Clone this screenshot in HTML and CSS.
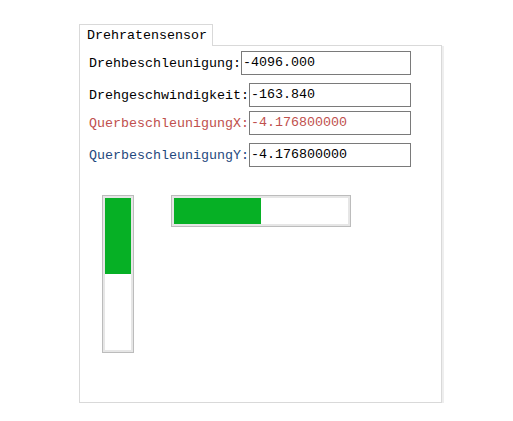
FILE: index.html
```html
<!DOCTYPE html>
<html>
<head>
<meta charset="utf-8">
<link rel="stylesheet" href="styles.css">
</head>
<body>
<div class="page">
  <div class="tab">Drehratensensor</div>
  <div class="panel">
    <div class="row r1"><span class="label">Drehbeschleunigung:</span><div class="field">-4096.000</div></div>
    <div class="row r2"><span class="label">Drehgeschwindigkeit:</span><div class="field">-163.840</div></div>
    <div class="row r3 red"><span class="label">QuerbeschleunigungX:</span><div class="field">-4.176800000</div></div>
    <div class="row r4 blue"><span class="label">QuerbeschleunigungY:</span><div class="field black">-4.176800000</div></div>
    <div class="bars">
      <div class="vbar"><div class="vfill" style="height:50%"></div></div>
      <div class="hbar"><div class="hfill" style="width:50%"></div></div>
    </div>
  </div>
</div>
</body>
</html>
```
FILE: styles.css
```css
html, body {
  margin: 0;
  padding: 0;
  background: #ffffff;
}
.page {
  padding: 24px 0 0 79px;
  font-family: "Liberation Mono", "DejaVu Sans Mono", monospace;
  font-size: 13.33px;
  color: #000;
}
.tab {
  position: relative;
  z-index: 1;
  width: 134px;
  height: 22px;
  box-sizing: border-box;
  border: 1px solid #d9d9d9;
  border-bottom: none;
  background: #fff;
  padding-left: 7px;
  line-height: 22px;
  margin-bottom: -1px;
}
.panel {
  width: 363px;
  height: 358px;
  box-sizing: border-box;
  border: 1px solid #d9d9d9;
  box-shadow: 2px 1px 0 #eeeeee;
  padding: 5px 0 0 9px;
}
.row {
  display: flex;
  align-items: center;
  width: 322px;
  height: 24px;
}
.r2 { margin-top: 8px; }
.r3 { margin-top: 4px; }
.r4 { margin-top: 8px; }
.label {
  white-space: nowrap;
}
.field {
  flex: 1;
  height: 24px;
  box-sizing: border-box;
  border: 1px solid #7a7a7a;
  padding: 0 1px;
  line-height: 22px;
  white-space: nowrap;
}
.red { color: #c0504d; }
.blue { color: #1f497d; }
.black { color: #000; }
.bars {
  display: flex;
  align-items: flex-start;
  margin: 28px 0 0 13px;
  gap: 37px;
}
.vbar {
  width: 32px;
  height: 158px;
  box-sizing: border-box;
  border: 1px solid #bcbcbc;
  background: #fff;
  box-shadow: inset 0 0 0 2px #e6e6e6;
  padding: 2px;
}
.vfill {
  width: 100%;
  background: #06b025;
}
.hbar {
  width: 180px;
  height: 32px;
  box-sizing: border-box;
  border: 1px solid #bcbcbc;
  background: #fff;
  box-shadow: inset 0 0 0 2px #e6e6e6;
  padding: 2px;
}
.hfill {
  height: 100%;
  background: #06b025;
}
```
